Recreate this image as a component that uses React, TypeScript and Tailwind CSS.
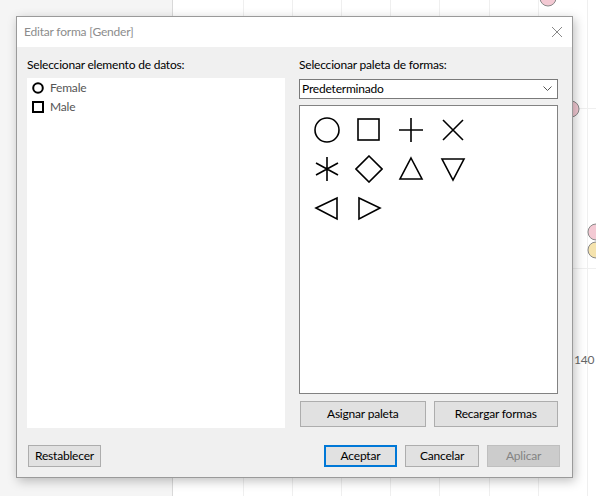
import React from 'react';

const font = { fontFamily: 'Lato, "Noto Sans", "Liberation Sans", sans-serif' };

function ShapeIcon({ kind }: { kind: string }) {
  const s = { stroke: '#000', strokeWidth: 1.6, fill: 'none' };
  return (
    <svg width="28" height="28" viewBox="0 0 28 28">
      {kind === 'circle' && <circle cx="14" cy="14" r="12" {...s} />}
      {kind === 'square' && <rect x="3" y="3" width="21" height="21" {...s} />}
      {kind === 'plus' && <path d="M14 2v24M2 14h24" {...s} />}
      {kind === 'x' && <path d="M4 4l20 20M24 4L4 24" {...s} />}
      {kind === 'star' && <path d="M14 2v24M3 8l22 12M3 20L25 8" {...s} />}
      {kind === 'diamond' && <path d="M14 1l13 13-13 13L1 14z" {...s} />}
      {kind === 'up' && <path d="M14 3l11 21H3z" {...s} />}
      {kind === 'down' && <path d="M3 4h22L14 25z" {...s} />}
      {kind === 'left' && <path d="M3 14L24 4v21z" {...s} />}
      {kind === 'right' && <path d="M4 4l21 10L4 25z" {...s} />}
    </svg>
  );
}

function Btn({
  children,
  className = '',
}: {
  children: React.ReactNode;
  className?: string;
}) {
  return <button className={`h-[22px] text-[12px] ${className}`}>{children}</button>;
}

const normal = 'border border-[#adadad] bg-[#e1e1e1] text-black';

export default function App() {
  const shapes = ['circle', 'square', 'plus', 'x', 'star', 'diamond', 'up', 'down', 'left', 'right'];
  const vlines = [243, 292, 341, 390, 439, 489, 538, 587];

  return (
    <div className="relative w-[596px] h-[496px] overflow-hidden bg-white tracking-[-0.2px]" style={font}>
      {/* chart behind the dialog */}
      <div className="absolute inset-0 flex">
        <div className="w-[173px] h-full bg-[#f5f5f5] border-r border-[#d9d9d9]" />
        <div className="flex-1 h-full bg-white" />
      </div>
      <svg className="absolute inset-0" width="596" height="496">
        {vlines.map((x) => (
          <line key={x} x1={x + 0.5} y1="0" x2={x + 0.5} y2="496" stroke="#efefef" />
        ))}
        <line x1="173" y1="108.5" x2="596" y2="108.5" stroke="#efefef" />
        <line x1="173" y1="268.5" x2="596" y2="268.5" stroke="#efefef" />
        <circle cx="548" cy="-2" r="8" fill="#f3c9d3" stroke="#888" />
        <circle cx="571" cy="109" r="8" fill="#f3c9d3" stroke="#888" />
        <circle cx="596" cy="232" r="8" fill="#f3c9d3" stroke="#888" />
        <circle cx="596" cy="250" r="8" fill="#f5e3ae" stroke="#888" />
      </svg>
      <span className="absolute left-[574px] top-[351px] text-[12px] text-[#666]">140</span>

      {/* dialog window */}
      <div className="absolute left-[16px] top-[16px] w-[557px] h-[462px] border border-[#9a9a9a] bg-[#f0f0f0] shadow-[2px_3px_10px_rgba(0,0,0,0.25)] flex flex-col">
        <div className="h-[30px] bg-white flex items-center justify-between pl-[7px] pr-[9px]">
          <span className="text-[12px] text-[#8c8c8c]">Editar forma [Gender]</span>
          <svg width="12" height="12" viewBox="0 0 12 12">
            <path d="M1 1l10 10M11 1L1 11" stroke="#888" strokeWidth="1" />
          </svg>
        </div>

        <div className="flex gap-[14px] pl-[10px] pr-[12px] pt-[10px]">
          <div className="w-[258px] flex flex-col">
            <div className="text-[12px] text-black h-[21px] leading-[16px]">
              Seleccionar elemento de datos:
            </div>
            <div className="h-[350px] bg-white pl-[5px]">
              <div className="flex items-center gap-[6px] h-[19px] text-[12px] text-[#555]">
                <svg width="12" height="12" viewBox="0 0 12 12">
                  <circle cx="6" cy="6" r="4.8" fill="none" stroke="#000" strokeWidth="2" />
                </svg>
                Female
              </div>
              <div className="flex items-center gap-[6px] h-[20px] text-[12px] text-[#555]">
                <svg width="12" height="12" viewBox="0 0 12 12">
                  <rect x="1" y="1" width="10" height="10" fill="none" stroke="#000" strokeWidth="2" />
                </svg>
                Male
              </div>
            </div>
          </div>

          <div className="w-[259px] flex flex-col">
            <div className="text-[12px] text-black h-[22px] leading-[16px]">
              Seleccionar paleta de formas:
            </div>
            <div className="h-[20px] border border-[#7a7a7a] bg-white flex items-center justify-between pl-[2px] pr-[5px] text-[12px] text-black">
              <span>Predeterminado</span>
              <svg width="9" height="6" viewBox="0 0 9 6">
                <path d="M0.5 0.5l4 4 4-4" fill="none" stroke="#555" strokeWidth="1" />
              </svg>
            </div>
            <div className="mt-[6px] h-[289px] border border-[#828282] bg-white pt-[10px] pl-[13px]">
              <div className="grid grid-cols-[repeat(4,42px)] gap-y-[11px] items-center">
                {shapes.map((k) => (
                  <div key={k} className="h-[28px] w-[28px]">
                    <ShapeIcon kind={k} />
                  </div>
                ))}
              </div>
            </div>
            <div className="mt-[7px] flex gap-[8px]">
              <Btn className={`${normal} w-[126px] h-[26px] ml-[1px]`}>Asignar paleta</Btn>
              <Btn className={`${normal} w-[125px] h-[26px]`}>Recargar formas</Btn>
            </div>
          </div>
        </div>

        <div className="flex items-center pl-[11px] pr-[12px] mt-[17px]">
          <Btn className={`${normal} w-[73px]`}>Restablecer</Btn>
          <div className="flex-1" />
          <Btn className="w-[73px] border-2 border-[#0078d7] bg-[#e1e1e1] text-black">Aceptar</Btn>
          <Btn className={`${normal} w-[74px] ml-[8px]`}>Cancelar</Btn>
          <Btn className="w-[73px] ml-[8px] border border-[#bfbfbf] bg-[#cccccc] text-[#838383]">Aplicar</Btn>
        </div>
      </div>
    </div>
  );
}
